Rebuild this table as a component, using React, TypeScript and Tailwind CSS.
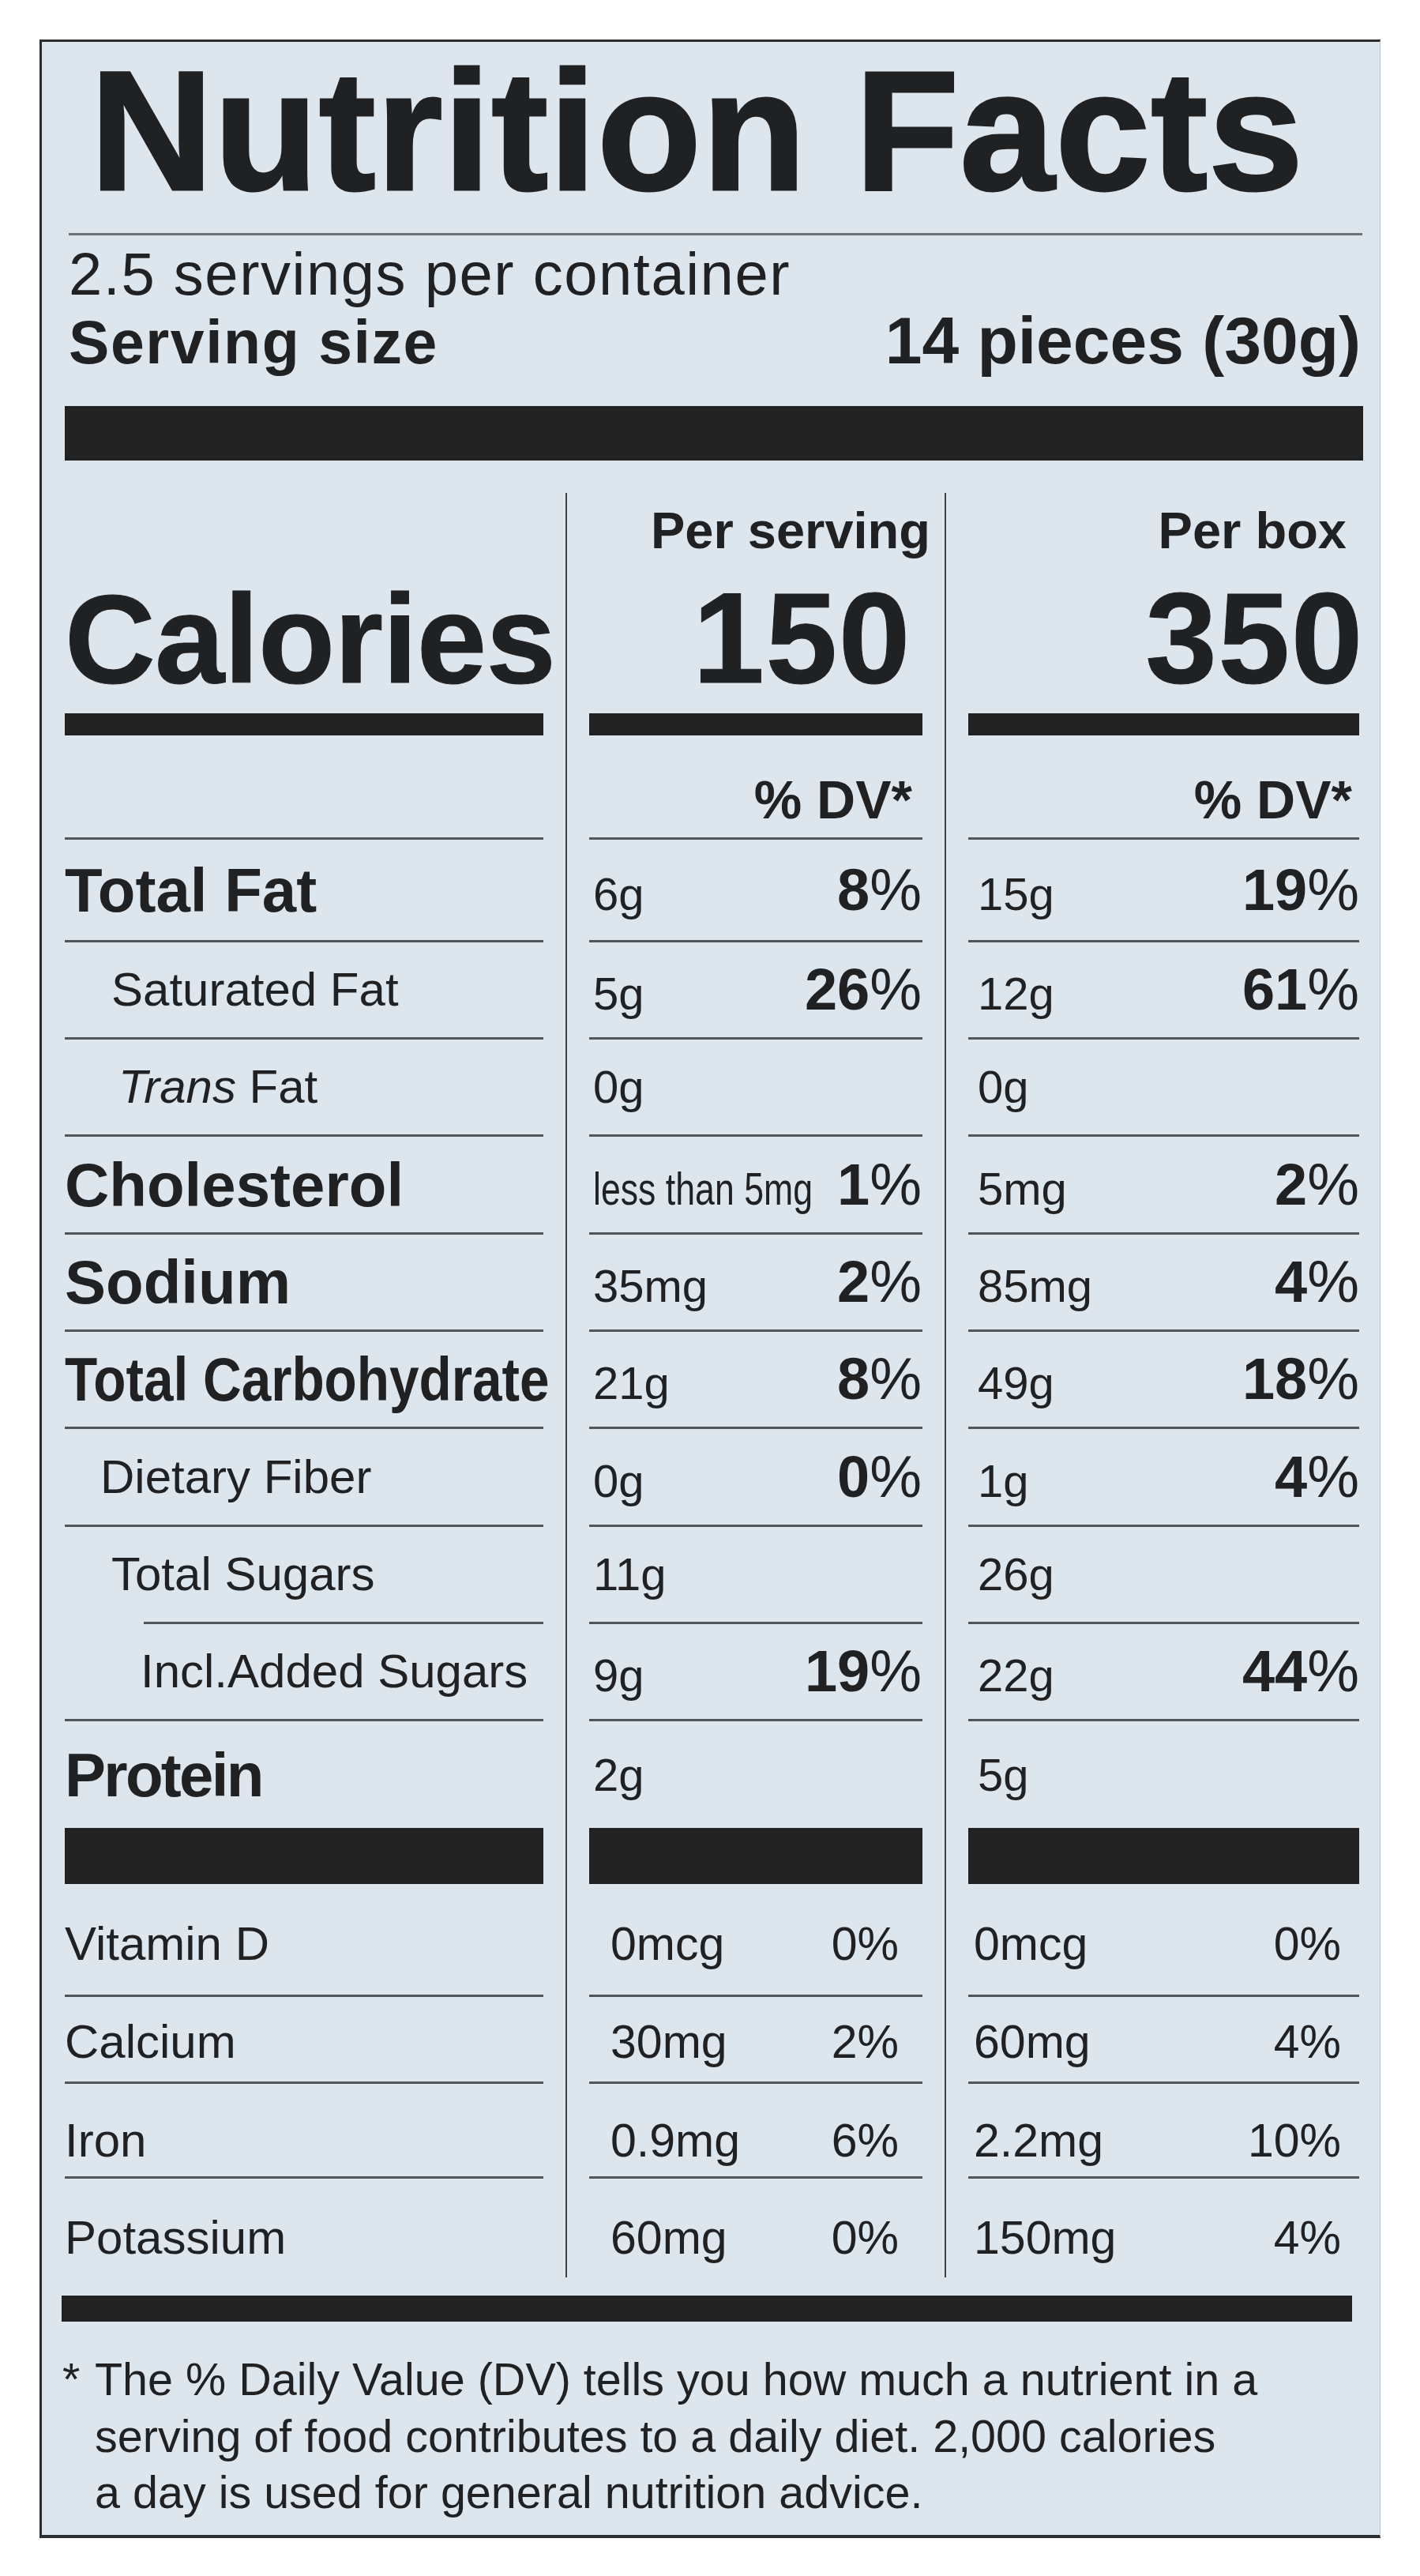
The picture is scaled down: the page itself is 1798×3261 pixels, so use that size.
import React from 'react';

type Val = React.ReactNode;

type Row = {
  label: React.ReactNode;
  labelCls: string;
  h: string;
  line?: boolean;
  indentLine?: boolean;
  s: [Val, string?];
  b: [Val, string?];
};

const Squeeze = ({ w, sx, children }: { w: string; sx: string; children: React.ReactNode }) => (
  <span className={`inline-block ${w}`}>
    <span className={`inline-block origin-left whitespace-nowrap ${sx}`}>{children}</span>
  </span>
);

const rows: Row[] = [
  { label: 'Total Fat', labelCls: 'font-bold text-[78px]', h: 'h-[127px]', line: true, s: ['6g', '8'], b: ['15g', '19'] },
  { label: 'Saturated Fat', labelCls: 'text-[60px] pl-[59px]', h: 'h-[120px]', line: true, s: ['5g', '26'], b: ['12g', '61'] },
  {
    label: (
      <>
        <i>Trans</i>
        {'\u00a0'}Fat
      </>
    ),
    labelCls: 'text-[60px] pl-[68px]',
    h: 'h-[120px]',
    line: true,
    s: ['0g'],
    b: ['0g'],
  },
  {
    label: 'Cholesterol',
    labelCls: 'font-bold text-[78px]',
    h: 'h-[121px]',
    line: true,
    s: [
      <Squeeze w="w-[276px]" sx="scale-x-[0.77]">
        less than 5mg
      </Squeeze>,
      '1',
    ],
    b: ['5mg', '2'],
  },
  { label: 'Sodium', labelCls: 'font-bold text-[78px]', h: 'h-[120px]', line: true, s: ['35mg', '2'], b: ['85mg', '4'] },
  {
    label: (
      <Squeeze w="w-[610px]" sx="scale-x-[0.865]">
        Total Carbohydrate
      </Squeeze>
    ),
    labelCls: 'font-bold text-[78px]',
    h: 'h-[120px]',
    line: true,
    s: ['21g', '8'],
    b: ['49g', '18'],
  },
  { label: 'Dietary Fiber', labelCls: 'text-[60px] pl-[45px]', h: 'h-[121px]', line: true, s: ['0g', '0'], b: ['1g', '4'] },
  { label: 'Total Sugars', labelCls: 'text-[60px] pl-[59px]', h: 'h-[120px]', line: true, indentLine: true, s: ['11g'], b: ['26g'] },
  { label: 'Incl.Added Sugars', labelCls: 'text-[60px] pl-[96px]', h: 'h-[120px]', line: true, s: ['9g', '19'], b: ['22g', '44'] },
  { label: 'Protein', labelCls: 'font-bold text-[78px] tracking-[-0.035em]', h: 'h-[135px]', s: ['2g'], b: ['5g'] },
];

type Vit = { label: string; h: string; line?: boolean; s: [string, string]; b: [string, string] };

const vits: Vit[] = [
  { label: 'Vitamin D', h: 'h-[140px] pt-[12px]', line: true, s: ['0mcg', '0%'], b: ['0mcg', '0%'] },
  { label: 'Calcium', h: 'h-[107px] pt-[7px]', line: true, s: ['30mg', '2%'], b: ['60mg', '4%'] },
  { label: 'Iron', h: 'h-[117px] pt-[27px]', line: true, s: ['0.9mg', '6%'], b: ['2.2mg', '10%'] },
  { label: 'Potassium', h: 'h-[125px] pt-[25px]', s: ['60mg', '0%'], b: ['150mg', '4%'] },
];

const Line = ({ indent }: { indent?: boolean }) => (
  <div className={`h-[3px] bg-[#50555a] ${indent ? 'ml-[100px]' : ''}`} />
);

const Pct = ({ n }: { n?: string }) =>
  n ? (
    <span className="text-[74px] leading-none">
      <span className="font-bold">{n}</span>%
    </span>
  ) : null;

const Bar = () => <div className="h-[28px] bg-[#222222]" />;
const BigBar = () => <div className="h-[71px] bg-[#222222]" />;

const ValueColumn = ({ which }: { which: 's' | 'b' }) => {
  const serving = which === 's';
  return (
    <>
      {rows.map((r, i) => (
        <div key={i}>
          <div className={`flex items-center ${r.h}`}>
            <div
              className={`flex w-full items-baseline justify-between text-[58px] leading-none ${
                serving ? 'pl-[5px] pr-[1px]' : 'pl-[12px] pr-0'
              }`}
            >
              <span>{r[which][0]}</span>
              <Pct n={r[which][1]} />
            </div>
          </div>
          {r.line && <Line />}
        </div>
      ))}
      <BigBar />
      {vits.map((v, i) => (
        <div key={i}>
          <div className={`flex items-center ${v.h}`}>
            <div
              className={`flex w-full items-baseline justify-between text-[59px] leading-none ${
                serving ? 'pl-[27px] pr-[30px]' : 'pl-[7px] pr-[23px]'
              }`}
            >
              <span>{v[which][0]}</span>
              <span>{v[which][1]}</span>
            </div>
          </div>
          {v.line && <Line />}
        </div>
      ))}
    </>
  );
};

export default function App() {
  return (
    <div className="min-h-[3261px] bg-white pl-[50px] pt-[50px] font-['Liberation_Sans',Arial,sans-serif] text-[#1f2123]">
      <div className="w-[1698px] border-t-[3px] border-l-[3px] border-b-[4px] border-r border-t-[#2a2e31] border-l-[#2a2e31] border-b-[#2a2e31] border-r-[#b9c1c8] bg-[#dde5ed] pl-[29px] pr-[21px] pb-[17px]">
        <div className="mt-[4px] pl-[32px] text-[216px] font-bold leading-none tracking-[0.004em] [-webkit-text-stroke:3px_#1f2123]">
          Nutrition Facts
        </div>
        <div className="mt-[22px] ml-[5px] mr-[1px] h-[3px] bg-[#6c7176]" />
        <div className="mt-[11px] pl-[5px] text-[76px] leading-none tracking-[0.02em]">2.5 servings per container</div>
        <div className="mt-[4px] flex items-baseline justify-between pl-[5px] pr-[3px] font-bold leading-none">
          <span className="text-[77px] tracking-[0.02em]">Serving size</span>
          <span className="text-[84px]">14 pieces (30g)</span>
        </div>
        <div className="mt-[41px] h-[69px] bg-[#222222]" />

        <div className="mt-[41px] flex">
          {/* name column */}
          <div className="w-[606px] shrink-0">
            <div className="flex h-[279px] flex-col justify-end pb-[14px]">
              <div className="text-[159px] font-bold leading-none tracking-[-0.005em] [-webkit-text-stroke:1px_#1f2123]">
                Calories
              </div>
            </div>
            <Bar />
            <div className="h-[129px]" />
            <Line />
            {rows.map((r, i) => (
              <div key={i}>
                <div className={`flex items-center whitespace-nowrap leading-none ${r.h} ${r.labelCls}`}>{r.label}</div>
                {r.line && <Line indent={r.indentLine} />}
              </div>
            ))}
            <BigBar />
            {vits.map((v, i) => (
              <div key={i}>
                <div className={`flex items-center text-[60px] leading-none ${v.h}`}>{v.label}</div>
                {v.line && <Line />}
              </div>
            ))}
          </div>

          {/* per serving */}
          <div className="ml-[28px] w-[452px] shrink-0 border-l-2 border-[#3d4246] pl-[28px]">
            <div className="flex h-[279px] flex-col items-end justify-end pb-[14px]">
              <div className="mb-[22px] mr-[-10px] text-[65px] font-bold leading-none">Per serving</div>
              <div className="pr-[14px] text-[163px] font-bold leading-none tracking-[0.01em] [-webkit-text-stroke:1px_#1f2123]">
                150
              </div>
            </div>
            <Bar />
            <div className="flex h-[129px] items-end justify-end pb-[14px] pr-[13px] text-[68px] font-bold leading-none">
              % DV*
            </div>
            <Line />
            <ValueColumn which="s" />
          </div>

          {/* per box */}
          <div className="ml-[28px] w-[525px] shrink-0 border-l-2 border-[#3d4246] pl-[28px]">
            <div className="flex h-[279px] flex-col items-end justify-end pb-[14px]">
              <div className="mb-[22px] pr-[16px] text-[65px] font-bold leading-none">Per box</div>
              <div className="mr-[-6px] text-[163px] font-bold leading-none tracking-[0.01em] [-webkit-text-stroke:1px_#1f2123]">
                350
              </div>
            </div>
            <Bar />
            <div className="flex h-[129px] items-end justify-end pb-[14px] pr-[9px] text-[68px] font-bold leading-none">
              % DV*
            </div>
            <Line />
            <ValueColumn which="b" />
          </div>
        </div>

        <div className="mt-[23px] ml-[-4px] h-[33px] w-[1634px] bg-[#222222]" />

        <div className="mt-[38px] ml-[-3px] flex text-[57.5px] leading-[71.5px]">
          <span className="w-[41px] shrink-0">*</span>
          <p>
            The % Daily Value (DV) tells you how much a nutrient in a
            <br />
            serving of food contributes to a daily diet. 2,000 calories
            <br />
            a day is used for general nutrition advice.
          </p>
        </div>
      </div>
    </div>
  );
}
